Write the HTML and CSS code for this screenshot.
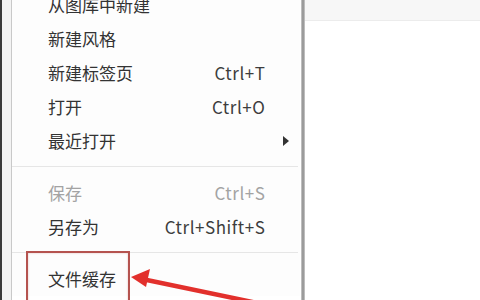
FILE: index.html
```html
<!DOCTYPE html>
<html>
<head>
<meta charset="utf-8">
<link rel="stylesheet" href="styles.css">
</head>
<body>
<div class="screen">
  <div class="left-strip"></div>
  <div class="menu">
    <div class="item"><span class="label">从图库中新建</span><span class="key"></span><span class="sub"></span></div>
    <div class="item"><span class="label">新建风格</span><span class="key"></span><span class="sub"></span></div>
    <div class="item"><span class="label">新建标签页</span><span class="key">Ctrl+T</span><span class="sub"></span></div>
    <div class="item"><span class="label">打开</span><span class="key">Ctrl+O</span><span class="sub"></span></div>
    <div class="item"><span class="label">最近打开</span><span class="key"></span><span class="sub"><span class="tri"></span></span></div>
    <div class="sep"></div>
    <div class="item disabled"><span class="label">保存</span><span class="key">Ctrl+S</span><span class="sub"></span></div>
    <div class="item"><span class="label">另存为</span><span class="key">Ctrl+Shift+S</span><span class="sub"></span></div>
    <div class="sep"></div>
    <div class="item"><span class="label">文件缓存</span><span class="key"></span><span class="sub"></span></div>
  </div>
  <div class="divider"></div>
  <div class="right-pane">
    <div class="topbar"></div>
  </div>
  <div class="highlight"></div>
  <svg class="arrow" width="480" height="300" viewBox="0 0 480 300">
    <line x1="142" y1="279" x2="262" y2="304" stroke="#e2302c" stroke-width="4.5" stroke-linecap="round"/>
    <polygon points="131,277 150,269 146,287" fill="#e2302c"/>
  </svg>
</div>
</body>
</html>
```
FILE: styles.css
```css
html, body {
  margin: 0;
  padding: 0;
  background: #ffffff;
}
.screen {
  position: relative;
  width: 480px;
  height: 300px;
  overflow: hidden;
  display: flex;
  font-family: "Noto Sans CJK SC", "Noto Sans", sans-serif;
}
.left-strip {
  width: 9px;
  flex: none;
  background: #f3f3f3;
  border-left: 2px solid #3a3a3a;
  border-right: 1px solid #c9c9c9;
}
.menu {
  width: 288px;
  flex: none;
  background: #fdfdfd;
  margin-top: -12.5px;
  align-self: flex-start;
}
.item {
  display: grid;
  grid-template-columns: 1fr auto 35px;
  align-items: center;
  height: 34px;
  padding-left: 36px;
  font-size: 17px;
  color: #333333;
}
.item .key {
  font-size: 17px;
  letter-spacing: 0.55px;
  margin-right: -0.5px;
  color: #3d3d3d;
}
.item.disabled .label,
.item.disabled .key {
  color: #a3a3a3;
}
.sub {
  display: flex;
  align-items: center;
  padding-left: 18px;
}
.tri {
  width: 0;
  height: 0;
  border-top: 5px solid transparent;
  border-bottom: 5px solid transparent;
  border-left: 6px solid #333;
}
.sep {
  height: 1px;
  background: #e6e6e6;
  margin: 8px 2px 9px 0;
}
.divider {
  width: 4px;
  flex: none;
  margin-left: 1px;
  background: linear-gradient(to right, #cfcfcf, #8a8a8a 50%, #cfcfcf);
}
.right-pane {
  flex: 1;
  background: #ffffff;
}
.topbar {
  height: 20px;
  background: #f7f7f7;
  border-bottom: 1px solid #ececec;
}
.highlight {
  position: absolute;
  left: 26px;
  top: 251px;
  width: 100px;
  height: 70px;
  border: 2px solid #b5534f;
  box-shadow: inset 0 0 2px rgba(181, 83, 79, 0.4);
}
.arrow {
  position: absolute;
  left: 0;
  top: 0;
}
```
